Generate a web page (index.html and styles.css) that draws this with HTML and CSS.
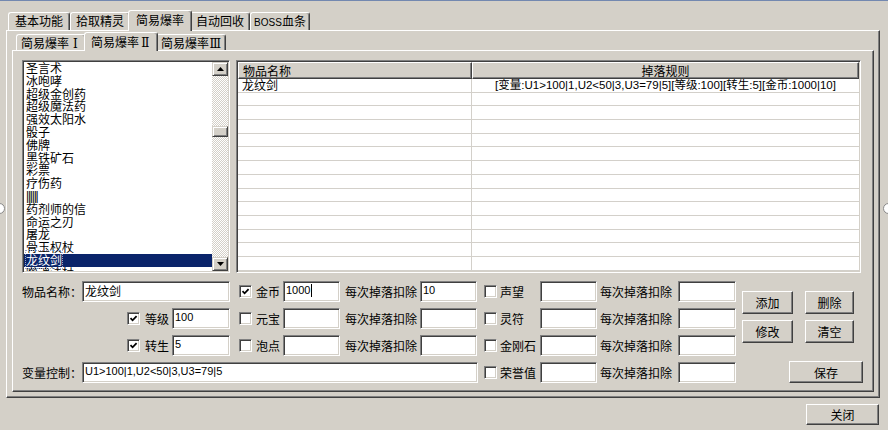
FILE: index.html
```html
<!DOCTYPE html>
<html lang="zh-CN">
<head>
<meta charset="utf-8">
<title>简易爆率</title>
<link rel="stylesheet" href="styles.css">
</head>
<body>
<div class="topline"></div>
<div class="window">
  <div class="tabs outer-tabs">
    <div class="tab first">基本功能</div>
    <div class="tab">拾取精灵</div>
    <div class="tab active">简易爆率</div>
    <div class="tab">自动回收</div>
    <div class="tab"><span class="boss">BOSS</span>血条</div>
  </div>
  <div class="panel outer-panel">
    <div class="tabs inner-tabs">
      <div class="tab">简易爆率<span class="rn">Ⅰ</span></div>
      <div class="tab active">简易爆率<span class="rn">Ⅱ</span></div>
      <div class="tab">简易爆率<span class="rn">Ⅲ</span></div>
    </div>
    <div class="panel inner-panel">
      <div class="top-row">
        <div class="listbox">
          <ul class="items">
            <li>圣言术</li>
            <li>冰咆哮</li>
            <li>超级金创药</li>
            <li>超级魔法药</li>
            <li>强效太阳水</li>
            <li>骰子</li>
            <li>佛牌</li>
            <li>黑铁矿石</li>
            <li>彩票</li>
            <li>疗伤药</li>
            <li class="bars">||||||</li>
            <li>药剂师的信</li>
            <li>命运之刃</li>
            <li>屠龙</li>
            <li>骨玉权杖</li>
            <li class="sel"><span class="focus">龙纹剑</span></li>
            <li>噬魂法杖</li>
          </ul>
          <div class="vscroll">
            <div class="sbtn"><svg width="7" height="4" viewBox="0 0 7 4"><path d="M3.5 0 L7 4 L0 4 Z" fill="#000"/></svg></div>
            <div class="track"><div class="thumb"></div></div>
            <div class="sbtn"><svg width="7" height="4" viewBox="0 0 7 4"><path d="M0 0 L7 0 L3.5 4 Z" fill="#000"/></svg></div>
          </div>
        </div>
        <div class="grid">
          <div class="ghead">
            <div class="gh c1">物品名称</div>
            <div class="gh c2">掉落规则</div>
          </div>
          <div class="grow"><div class="gc c1">龙纹剑</div><div class="gc c2">[变量:U1&gt;100|1,U2&lt;50|3,U3=79|5][等级:100][转生:5][金币:1000|10]</div></div>
          <div class="grow"><div class="gc c1"></div><div class="gc c2"></div></div>
          <div class="grow"><div class="gc c1"></div><div class="gc c2"></div></div>
          <div class="grow"><div class="gc c1"></div><div class="gc c2"></div></div>
          <div class="grow"><div class="gc c1"></div><div class="gc c2"></div></div>
          <div class="grow"><div class="gc c1"></div><div class="gc c2"></div></div>
          <div class="grow"><div class="gc c1"></div><div class="gc c2"></div></div>
          <div class="grow"><div class="gc c1"></div><div class="gc c2"></div></div>
          <div class="grow"><div class="gc c1"></div><div class="gc c2"></div></div>
          <div class="grow"><div class="gc c1"></div><div class="gc c2"></div></div>
          <div class="grow"><div class="gc c1"></div><div class="gc c2"></div></div>
          <div class="grow"><div class="gc c1"></div><div class="gc c2"></div></div>
          <div class="grow"><div class="gc c1"></div><div class="gc c2"></div></div>
          <div class="grow"><div class="gc c1"></div><div class="gc c2"></div></div>
        </div>
      </div>

      <div class="form">
        <!-- row 1 -->
        <div class="cell a-name">
          <span class="lbl lbl-wide">物品名称：</span>
          <div class="field f-name cjk">龙纹剑</div>
        </div>
        <div class="cell b">
          <span class="cb"><svg width="9" height="9" viewBox="0 0 9 9"><path d="M1.5 4.2 L3.6 6.3 L7.6 2.2" fill="none" stroke="#000" stroke-width="1.8"/></svg></span>
          <span class="lbl lbl-b">金币</span>
          <div class="field f-s">1000<span class="caret"></span></div>
          <span class="lbl lbl-ded">每次掉落扣除</span>
          <div class="field f-s">10</div>
        </div>
        <div class="cell c">
          <span class="cb"></span>
          <span class="lbl lbl-c">声望</span>
          <div class="field f-s"></div>
          <span class="lbl lbl-ded">每次掉落扣除</span>
          <div class="field f-s2"></div>
        </div>
        <div class="cell d">
          <div class="btn-grid">
            <button class="btn b-add">添加</button>
            <button class="btn b-del">删除</button>
            <button class="btn b-add">修改</button>
            <button class="btn b-del">清空</button>
          </div>
          <button class="btn b-save">保存</button>
        </div>

        <!-- row 2 -->
        <div class="cell a-chk">
          <span class="cb"><svg width="9" height="9" viewBox="0 0 9 9"><path d="M1.5 4.2 L3.6 6.3 L7.6 2.2" fill="none" stroke="#000" stroke-width="1.8"/></svg></span>
          <span class="lbl lbl-a">等级</span>
          <div class="field f-a">100</div>
        </div>
        <div class="cell b">
          <span class="cb"></span>
          <span class="lbl lbl-b">元宝</span>
          <div class="field f-s"></div>
          <span class="lbl lbl-ded">每次掉落扣除</span>
          <div class="field f-s"></div>
        </div>
        <div class="cell c">
          <span class="cb"></span>
          <span class="lbl lbl-c">灵符</span>
          <div class="field f-s"></div>
          <span class="lbl lbl-ded">每次掉落扣除</span>
          <div class="field f-s2"></div>
        </div>

        <!-- row 3 -->
        <div class="cell a-chk">
          <span class="cb"><svg width="9" height="9" viewBox="0 0 9 9"><path d="M1.5 4.2 L3.6 6.3 L7.6 2.2" fill="none" stroke="#000" stroke-width="1.8"/></svg></span>
          <span class="lbl lbl-a">转生</span>
          <div class="field f-a">5</div>
        </div>
        <div class="cell b">
          <span class="cb"></span>
          <span class="lbl lbl-b">泡点</span>
          <div class="field f-s"></div>
          <span class="lbl lbl-ded">每次掉落扣除</span>
          <div class="field f-s"></div>
        </div>
        <div class="cell c">
          <span class="cb"></span>
          <span class="lbl lbl-c">金刚石</span>
          <div class="field f-s"></div>
          <span class="lbl lbl-ded">每次掉落扣除</span>
          <div class="field f-s2"></div>
        </div>

        <!-- row 4 -->
        <div class="cell a-var">
          <span class="lbl lbl-wide">变量控制：</span>
          <div class="field f-var">U1&gt;100|1,U2&lt;50|3,U3=79|5</div>
        </div>
        <div class="cell c">
          <span class="cb"></span>
          <span class="lbl lbl-c">荣誉值</span>
          <div class="field f-s"></div>
          <span class="lbl lbl-ded">每次掉落扣除</span>
          <div class="field f-s2"></div>
        </div>
      </div>
    </div>
  </div>
  <div class="footer">
    <button class="btn b-close">关闭</button>
  </div>
</div>
<div class="handle handle-left"></div>
<div class="handle handle-right"></div>
</body>
</html>
```

FILE: styles.css
```css
* { box-sizing: border-box; }
html, body { margin: 0; padding: 0; }
body {
  width: 888px;
  height: 430px;
  overflow: hidden;
  position: relative;
  background: #d4d0c8;
  color: #000;
  font-family: "Liberation Sans", "Noto Sans CJK SC", sans-serif;
  font-size: 12px;
}
.topline { height: 1px; background: #7388b0; }

.window { padding: 0 8px 0 6px; }

/* ---------- tabs ---------- */
.tabs { display: flex; align-items: flex-end; position: relative; z-index: 2; }
.tab {
  flex: none;
  height: 18px;
  line-height: 16px;
  text-align: center;
  white-space: nowrap;
  background: #d4d0c8;
  border-top: 1px solid #fff;
  border-left: 1px solid #fff;
  border-right: 1px solid #404040;
  border-radius: 3px 3px 0 0;
  box-shadow: inset -1px 0 #808080;
  font-family: "Noto Sans CJK SC", sans-serif;
}
.boss { font-family: "Liberation Sans", sans-serif; font-size: 10px; }
.outer-tabs { height: 29px; padding-left: 2px; }
.outer-tabs .tab { width: 60px; }
.outer-tabs .tab.first { width: 62px; }
.outer-tabs .tab.active {
  width: 64px;
  height: 21px;
  line-height: 18px;
  margin: 0 -2px -1px;
  position: relative;
  z-index: 3;
}
.inner-tabs { height: 19px; padding-left: 4px; }
.inner-tabs .tab { width: 70px; height: 16px; line-height: 15px; }
.inner-tabs .tab.active {
  width: 74px;
  height: 19px;
  line-height: 17px;
  margin: 0 -2px -1px;
  position: relative;
  z-index: 3;
}
.rn {
  display: inline-block;
  width: 12px;
  text-align: center;
  font-family: "DejaVu Serif", "Liberation Serif", "Noto Sans CJK SC", serif;
  font-size: 12px;
  letter-spacing: -0.5px;
}

/* ---------- panels ---------- */
.panel {
  border: 1px solid;
  border-color: #fff #404040 #404040 #fff;
  box-shadow: inset -1px -1px #808080;
  position: relative;
  z-index: 1;
}
.outer-panel {
  width: 874px;
  height: 368px;
  padding: 0 5px 5px 5px;
}
.inner-panel {
  width: 862px;
  height: 342px;
  padding: 9px 12px 0 9px;
}

/* ---------- top row ---------- */
.top-row { display: flex; gap: 6px; height: 213px; }

.listbox {
  width: 208px;
  height: 213px;
  display: flex;
  background: #fff;
  border: 1px solid;
  border-color: #808080 #fff #fff #808080;
  box-shadow: inset 1px 1px #404040, inset -1px -1px #d4d0c8;
  padding: 1px;
}
.items {
  list-style: none;
  margin: 0;
  padding: 0;
  flex: 1;
  overflow: hidden;
  font-family: "Noto Sans CJK SC", sans-serif;
}
.items li {
  height: 12.8px;
  line-height: 12.8px;
  padding-left: 2px;
  white-space: nowrap;
}
.items li.bars { font-family: "Liberation Sans", sans-serif; letter-spacing: -1.2px; }
.items li.sel { background: #0a246a; color: #fff; }
.items li.sel .focus { outline: 1px dotted #9aa6c8; outline-offset: 0; }

.vscroll { width: 16px; display: flex; flex-direction: column; }
.sbtn {
  height: 14px;
  display: flex;
  align-items: center;
  justify-content: center;
  background: #d4d0c8;
  border: 1px solid;
  border-color: #d4d0c8 #404040 #404040 #d4d0c8;
  box-shadow: inset 1px 1px #fff, inset -1px -1px #808080;
}
.track {
  flex: 1;
  background-color: #fff;
  background-image: repeating-conic-gradient(#d4d0c8 0 25%, #fff 0 50%);
  background-size: 2px 2px;
}
.thumb {
  margin-top: 50px;
  height: 11px;
  background: #d4d0c8;
  border: 1px solid;
  border-color: #d4d0c8 #404040 #404040 #d4d0c8;
  box-shadow: inset 1px 1px #fff, inset -1px -1px #808080;
}

.grid {
  flex: 1;
  height: 213px;
  overflow: hidden;
  background: #fff;
  border: 1px solid;
  border-color: #808080 #fff #fff #808080;
  box-shadow: inset 1px 1px #404040, inset -1px -1px #d4d0c8;
  padding: 1px;
}
.ghead { display: flex; height: 17px; }
.gh {
  height: 17px;
  line-height: 15px;
  background: #d4d0c8;
  border: 1px solid;
  border-color: #fff #404040 #404040 #fff;
  box-shadow: inset -1px -1px #808080;
  white-space: nowrap;
  font-family: "Noto Sans CJK SC", sans-serif;
}
.c1 { width: 234px; flex: none; padding-left: 4px; }
.c2 { flex: 1; text-align: center; }
.grow { display: flex; height: 13.7px; border-bottom: 1px solid #d3d0ca; }
.gc { line-height: 12.7px; white-space: nowrap; }
.gc.c1 { border-right: 1px solid #d3d0ca; font-family: "Noto Sans CJK SC", sans-serif; }
.gc.c2 { font-size: 11.5px; }

/* ---------- form ---------- */
.form {
  margin-top: 8px;
  display: grid;
  grid-template-columns: 217px 245px 258px 1fr;
  grid-template-rows: repeat(4, 21px);
  row-gap: 6px;
}
.cell { display: flex; align-items: center; height: 21px; }
.a-name { grid-column: 1; grid-row: 1; }
.a-chk { grid-column: 1; justify-content: flex-end; padding-right: 9px; }
.a-var { grid-column: 1 / 3; grid-row: 4; }
.b { grid-column: 2; }
.c { grid-column: 3; }
.d { grid-column: 4; grid-row: 1 / 5; height: auto; flex-direction: column; align-items: stretch; padding-top: 10px; }

.lbl { flex: none; white-space: nowrap; font-family: "Noto Sans CJK SC", sans-serif; }
.lbl-wide { width: 60px; }
.lbl-a { margin: 0 3px 0 5px; }
.lbl-b { width: 27px; margin-left: 4px; }
.lbl-c { width: 40px; margin-left: 3px; }
.lbl-ded { width: 80px; padding-left: 5px; }
.c .lbl-ded { width: 81px; padding-left: 3px; }

.cb {
  flex: none;
  width: 13px;
  height: 13px;
  display: flex;
  align-items: center;
  justify-content: center;
  background: #fff;
  border: 1px solid;
  border-color: #808080 #fff #fff #808080;
  box-shadow: inset 1px 1px #404040, inset -1px -1px #d4d0c8;
}

.field {
  flex: none;
  height: 21px;
  line-height: 17px;
  padding: 0 2px;
  background: #fff;
  white-space: nowrap;
  overflow: hidden;
  border: 1px solid;
  border-color: #808080 #fff #fff #808080;
  box-shadow: inset 1px 1px #404040, inset -1px -1px #d4d0c8;
  font-family: "Liberation Sans", "Noto Sans CJK SC", sans-serif;
  font-size: 11px;
}
.field.cjk { font-family: "Noto Sans CJK SC", sans-serif; font-size: 12px; }
.f-name { width: 148px; }
.f-a { width: 58px; }
.f-s { width: 57px; }
.f-s2 { width: 58px; }
.f-var { width: 396px; }
.caret { display: inline-block; width: 1px; height: 13px; background: #000; vertical-align: -3px; margin-left: 1px; }

.btn {
  font-family: "Noto Sans CJK SC", sans-serif;
  font-size: 12px;
  color: #000;
  background: #d4d0c8;
  border: 1px solid;
  border-color: #fff #404040 #404040 #fff;
  box-shadow: inset -1px -1px #808080, inset 1px 1px #d4d0c8;
  padding: 0;
  height: 23px;
  line-height: 19px;
}
.btn-grid {
  display: grid;
  grid-template-columns: 51px 49px;
  column-gap: 12px;
  row-gap: 6px;
}
.b-save { width: 74px; align-self: flex-end; margin-top: 18px; margin-right: -2px; }

.footer { display: flex; justify-content: flex-end; margin-top: 6px; padding-right: 1px; }
.b-close { width: 73px; height: 21px; line-height: 17px; }

/* ---------- resize handles over the edges ---------- */
.handle {
  position: absolute;
  top: 203px;
  width: 11px;
  height: 11px;
  border-radius: 50%;
  background: #fff;
  border: 1px solid #8a8a8a;
}
.handle-left { left: -6px; }
.handle-right { right: -6px; }
```
